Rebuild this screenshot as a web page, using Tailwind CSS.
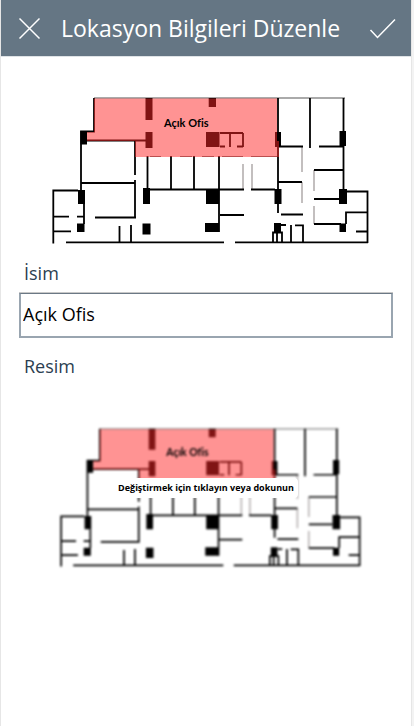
<!DOCTYPE html>
<html lang="tr">
<head>
<meta charset="utf-8">
<meta name="viewport" content="width=device-width, initial-scale=1">
<title>Lokasyon Bilgileri Düzenle</title>
<script src="https://cdn.jsdelivr.net/npm/@tailwindcss/browser@4"></script>
</head>
<body class="flex min-h-screen bg-[#f3f3f3] font-['Open_Sans','Noto_Sans',sans-serif]">
<svg class="hidden" aria-hidden="true">
  <symbol id="plan" viewBox="50 95 320 150" preserveAspectRatio="none">
    <g fill="none" stroke="#000" stroke-width="1.800">
      <path stroke="#aaa" d="M94 98H345"/>
      <path stroke="#b0aaaa" stroke-width="1.500" d="M302 147V172M302 182V203M314 170V191M314 206V224M243 164V189M252 164V189"/>
      <path stroke="#777" stroke-width="1" d="M150 156.500H161M180 156.500H192M202 156.500H214M222 156.500H243M251 156.500H278"/>
      <!-- west wing -->
      <path d="M94 98V131.500H81V190M87 140.500H147M135 141V175M135 180V218M81 183H135M78 190.500H53.300V243.500M53 216.700H69M77 216.700H84M84 204V224M53 231.300H71M95 217.500H136M119.500 226V242M131 225V242"/>
      <!-- central rooms -->
      <path d="M66 242.300H224M235 242.300H368M147.500 156V189M150 189.500H244M251 189.500H275M171 156V189M194 156V189M219 156V232M220 215H244M220 133H243M230 133V147M243 133V147M220 146.500H225M237 146.500H243M278 98V213"/>
      <!-- east wing -->
      <path d="M310 98V148M343.500 98V190M279 146.500H303M319 146.500H343M278 182H302M314 170H344M314 199H339M281 214.500H303M314 224H341M346 224V212.300H367M347 191.500H367.500V243M356 231.500H367M291 225V242M295 225.300H303V242M281 225H286M273 242V232.500H282V242M277 232V242"/>
    </g>
    <path d="M80.500 131H87V144.500H80.500ZM78 190H85V204H78ZM77 223.500H84.500V232H77ZM145.500 98H152.500V120H145.500ZM145.500 132H152.500V148H145.500ZM143 188H150V204H143ZM142.500 223.500H150.500V234.500H142.500ZM208.700 98H216V107H208.700ZM206 132H219.500V147H206ZM206 189H219V204H206ZM205 223H219V232H205ZM275 132H281V147H275ZM274.500 189H281.500V204H274.500ZM274 223H281V233H274ZM339.500 131H346V146H339.500ZM339 189H347V204H339ZM339.500 223.500H346V232H339.500Z"/>
    <path fill="#ff2828" fill-opacity=".5" d="M94 98.500H277V141H279V157H135V141H87V132H94Z"/>
    <text x="164" y="127" class="font-['Lato','Open_Sans',sans-serif] text-[11px] font-bold">Açık Ofis</text>
  </symbol>
</svg>
<div class="mr-0.5 flex grow flex-col border-x border-[#e6e6e6] bg-white">
  <header class="flex h-[57px] items-center gap-5 border-b border-[#dfe3e6] bg-[#657684] pr-3.5 pl-4 text-white">
    <button type="button" aria-label="Kapat" class="flex w-6 justify-center">
      <svg class="size-6" viewBox="0 0 24 24" fill="none" stroke="currentColor" stroke-width="1.500"><path d="M2.500 2.500L22.500 22.500M22.500 2.500L2.500 22.500"/></svg>
    </button>
    <h1 class="text-[23px] whitespace-nowrap">Lokasyon Bilgileri Düzenle</h1>
    <button type="button" aria-label="Kaydet" class="ml-auto flex">
      <svg class="h-6 w-7" viewBox="0 0 28 24" fill="none" stroke="currentColor" stroke-width="1.500"><path d="M1.500 14L8.500 21.500L26 3.500"/></svg>
    </button>
  </header>
  <main class="px-[18px] pt-[38px]">
    <svg class="mx-auto h-[150px] w-[320px] translate-x-1" role="img" aria-label="Kat planı"><use href="#plan"/></svg>
    <label for="name" class="mt-4 block px-[5px] text-lg leading-6 text-[#2c3e50]">İsim</label>
    <input id="name" type="text" value="Açık Ofis" class="mt-2 block h-[45px] w-full border-x-2 border-t border-b-2 border-x-[#99a5b0] border-t-[#6b7885] border-b-[#99a5b0] px-0.5 pb-0.5 text-lg text-black shadow-[0_-1px_0_#c8c8c8] outline-none">
    <label for="image" class="mt-4 block px-[5px] text-lg leading-6 text-[#2c3e50]">Resim</label>
    <button id="image" type="button" class="mx-auto mt-12 grid w-[304px] translate-x-1 place-items-center">
      <svg class="col-start-1 row-start-1 h-[142px] w-full blur-[1px]" aria-hidden="true"><use href="#plan"/></svg>
      <span class="z-10 col-start-1 row-start-1 mr-2 mb-[18px] rounded-sm bg-white px-1 text-[9px] leading-5 font-bold whitespace-nowrap text-black">Değiştirmek için tıklayın veya dokunun</span>
    </button>
  </main>
</div>
</body>
</html>
